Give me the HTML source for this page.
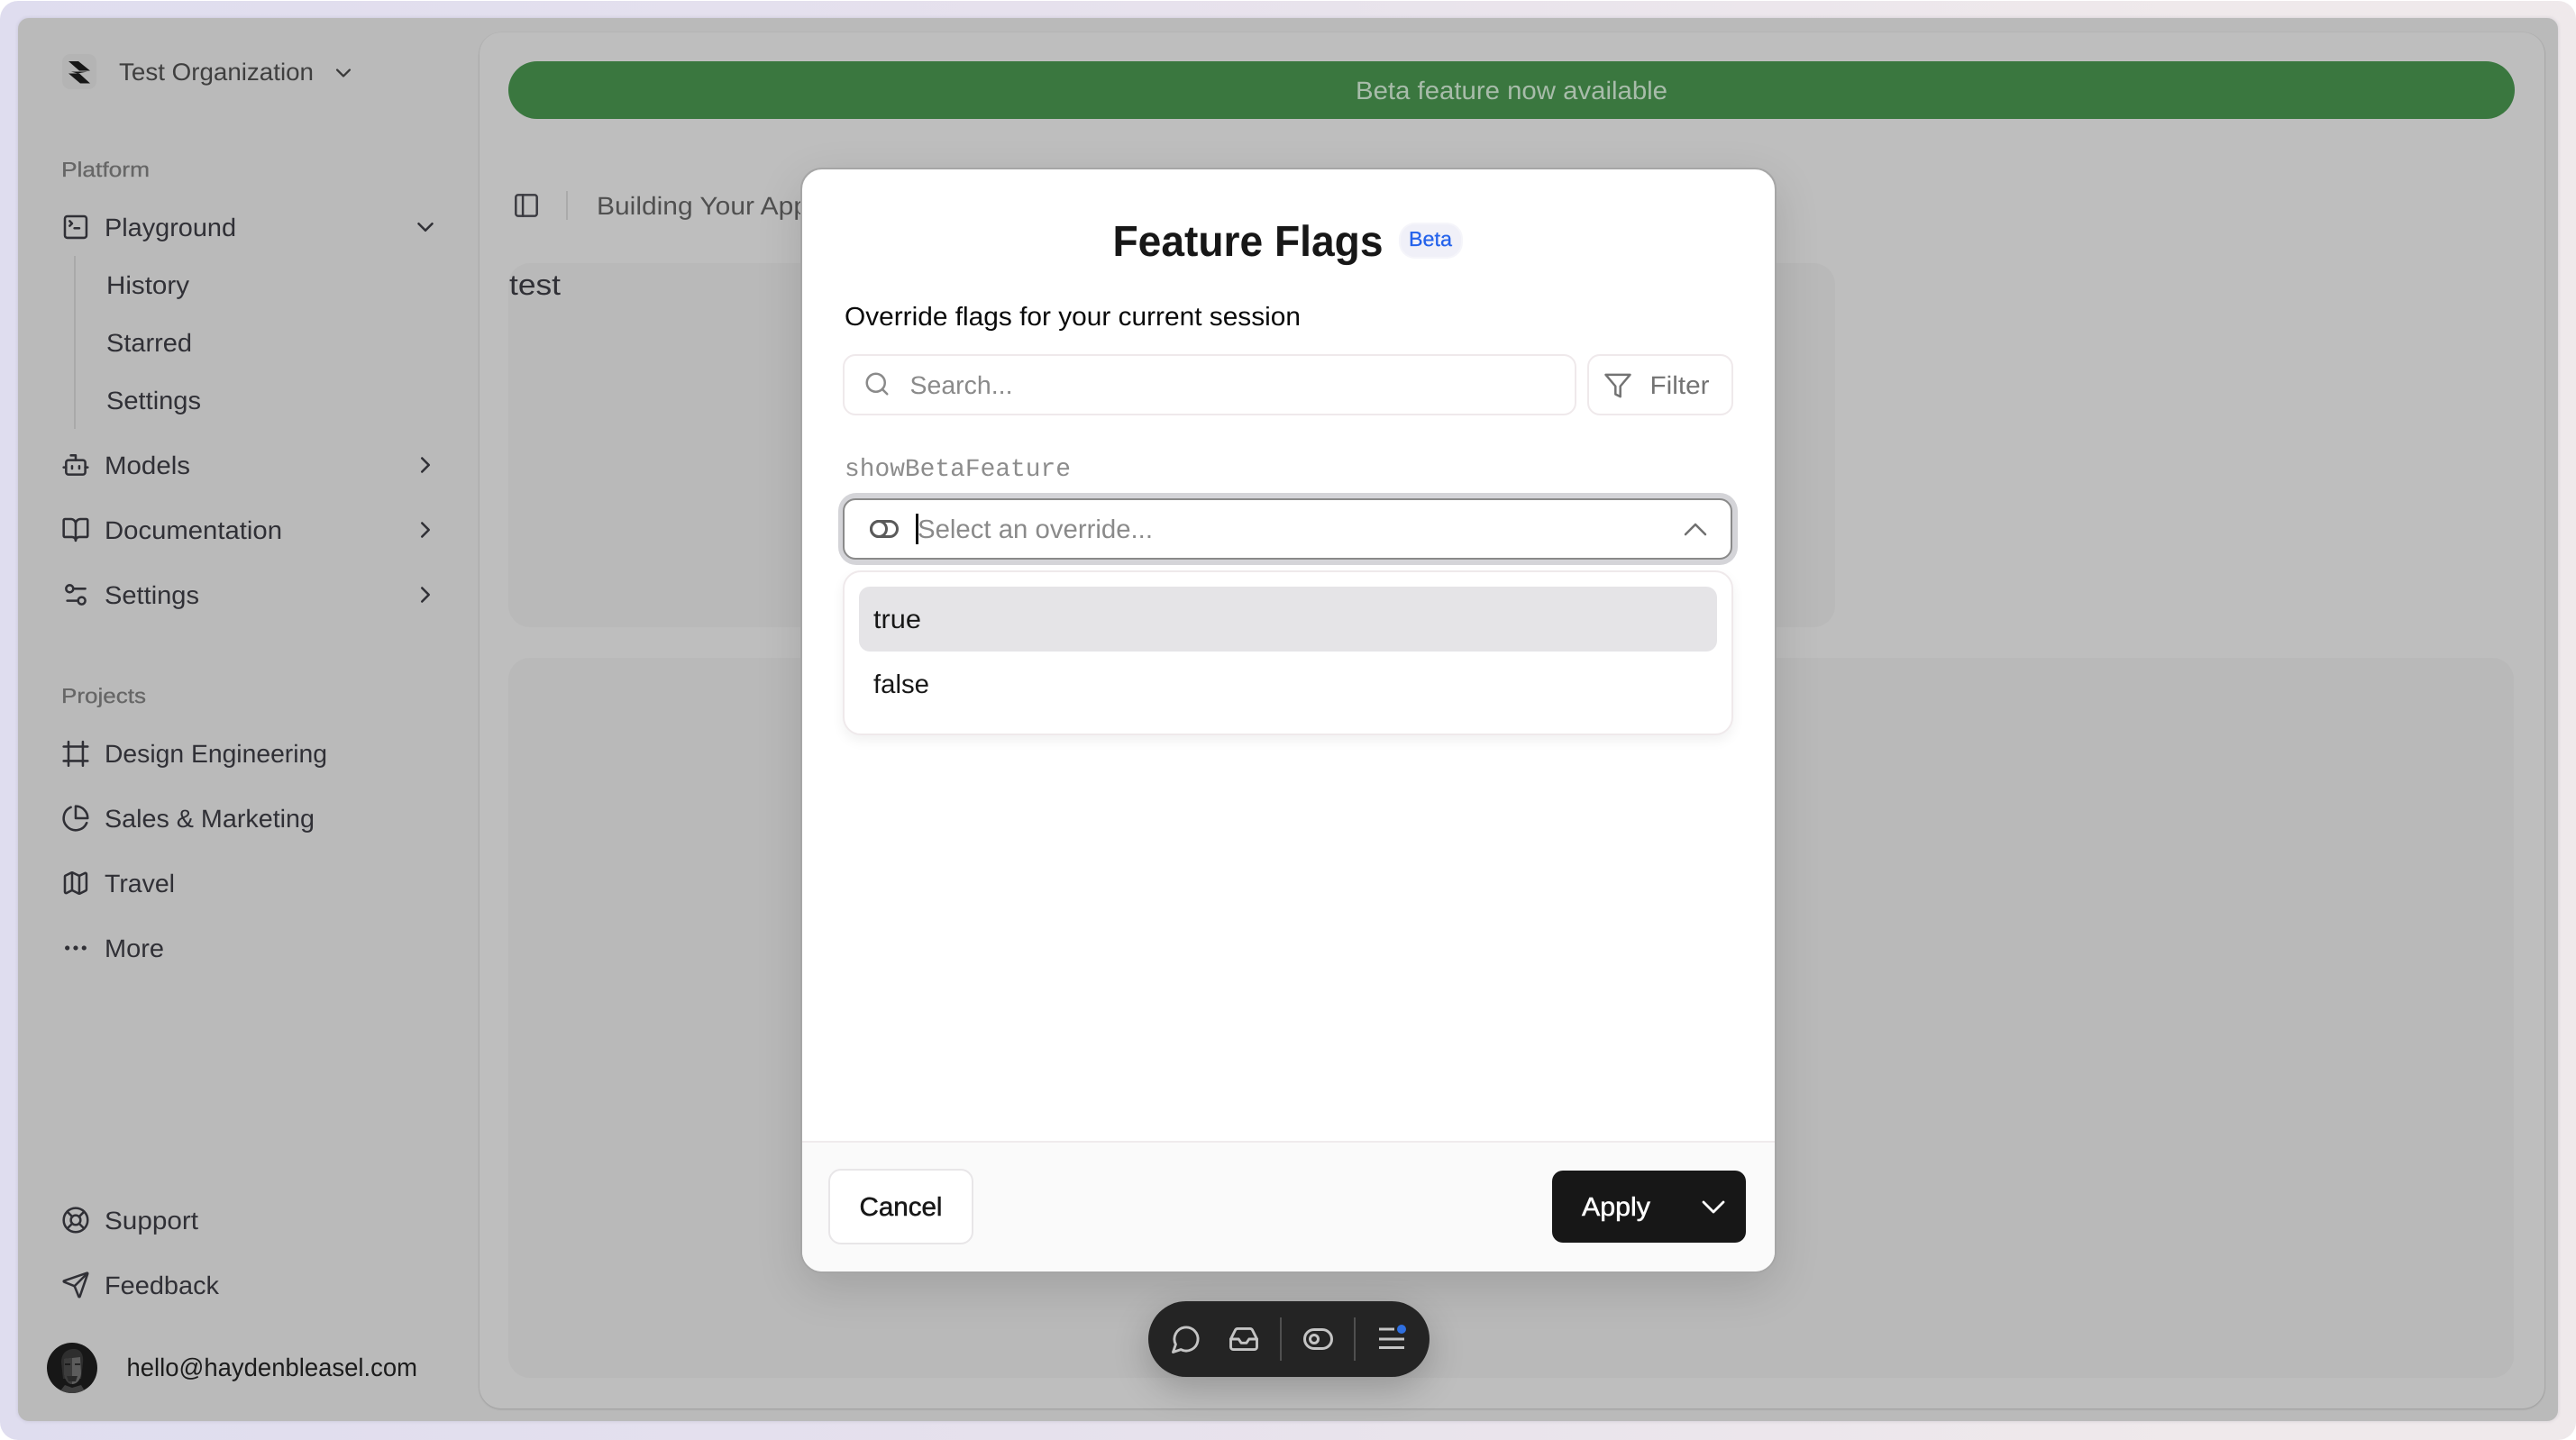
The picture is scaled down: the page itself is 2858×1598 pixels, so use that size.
<!DOCTYPE html>
<html lang="en">
<head>
<meta charset="utf-8">
<title>Feature Flags</title>
<style>
html,body{margin:0;padding:0;background:#fff;}
body{position:relative;width:2858px;height:1598px;overflow:hidden;font-family:"Liberation Sans",sans-serif;}
div{position:absolute;box-sizing:border-box;}
svg{position:absolute;left:0;top:0;overflow:visible;}
text{font-family:"Liberation Sans",sans-serif;text-rendering:geometricPrecision;}
.i{fill:none;stroke-linecap:round;stroke-linejoin:round;stroke-width:2;}
.n{fill:none;stroke:#303036;stroke-linecap:round;stroke-linejoin:round;stroke-width:1.9;}
#frame{left:0;top:1px;width:2858px;height:1597px;border-radius:20px;background:linear-gradient(90deg,#dfddef 0%,#e6e1ed 40%,#efe9eb 85%,#efe9eb 100%);}
#win{left:20px;top:20px;width:2818px;height:1557px;border-radius:12px;background:#bababa;box-shadow:0 0 4px rgba(60,60,90,.16);}
#main{left:532px;top:36px;width:2291px;height:1527px;border-radius:24px;background:#bebebe;box-shadow:0 1px 2px rgba(0,0,0,.16),-1px 0 1px rgba(0,0,0,.025),1px 0 1px rgba(0,0,0,.05);}
.card{background:#b9b9b9;border-radius:24px;}
#banner{left:564px;top:68px;width:2226px;height:64px;border-radius:32px;background:#3a773f;}
#modal{left:888px;top:186px;width:1083px;height:1227px;border-radius:24px;background:#fff;border:2px solid #a6a6a6;overflow:hidden;box-shadow:0 16px 50px rgba(0,0,0,.13);}
#foot{left:0;top:1078px;width:1079px;height:147px;background:#fafafa;border-top:2px solid #efebed;}
.box{background:#fff;border:2px solid #efe9eb;border-radius:14px;}
#toolbar{left:1274px;top:1444px;width:312px;height:84px;border-radius:42px;background:#242424;box-shadow:0 12px 40px rgba(0,0,0,.22);}
</style>
</head>
<body>
<div id="frame"></div>
<div id="win"></div>
<div id="main"></div>
<div class="card" style="left:564px;top:292px;width:1472px;height:404px;"></div>
<div class="card" style="left:564px;top:730px;width:2225px;height:799px;"></div>
<div id="banner"></div>

<svg width="2858" height="1598" viewBox="0 0 2858 1598">
  <!-- org -->
  <rect x="69" y="60" width="38" height="39" rx="9" fill="#b4b4b4"/>
  <path d="M76 68H87L100 78.5H88Z M76 81.5H88L100 92.5H89Z M79 79.5H97L86 81.5Z" fill="#171717"/>
  <text x="132" y="89" font-size="27" fill="#3f3f3f" textLength="216" lengthAdjust="spacingAndGlyphs">Test Organization</text>
  <g transform="translate(367.2 67.2) scale(1.15)"><path class="i" stroke="#3a3a3a" d="m6 9 6 6 6-6"/></g>

  <!-- banner text -->
  <text x="1504" y="110" font-size="28" fill="#a8bcaa" textLength="346" lengthAdjust="spacingAndGlyphs">Beta feature now available</text>

  <!-- Platform -->
  <text x="68" y="196" font-size="23" fill="#666" stroke="#666" stroke-width=".3" textLength="98" lengthAdjust="spacingAndGlyphs">Platform</text>

  <g transform="translate(68 236) scale(1.33)" class="n"><path d="m7 11 2-2-2-2"/><path d="M11 13h4"/><rect x="3" y="3" width="18" height="18" rx="2"/></g>
  <text x="116" y="262" font-size="28" fill="#303036" textLength="146" lengthAdjust="spacingAndGlyphs">Playground</text>
  <g transform="translate(457 237) scale(1.25)"><path class="i" stroke="#303036" d="m6 9 6 6 6-6"/></g>

  <rect x="82" y="284" width="2" height="192" fill="#a9a9a9"/>
  <text x="118" y="326" font-size="28" fill="#303036" textLength="92" lengthAdjust="spacingAndGlyphs">History</text>
  <text x="118" y="390" font-size="28" fill="#303036" textLength="95" lengthAdjust="spacingAndGlyphs">Starred</text>
  <text x="118" y="454" font-size="28" fill="#303036" textLength="105" lengthAdjust="spacingAndGlyphs">Settings</text>

  <g transform="translate(68 500) scale(1.33)" class="n"><path d="M12 8V4H8"/><rect width="16" height="12" x="4" y="8" rx="2"/><path d="M2 14h2"/><path d="M20 14h2"/><path d="M15 13v2"/><path d="M9 13v2"/></g>
  <text x="116" y="526" font-size="28" fill="#303036" textLength="95" lengthAdjust="spacingAndGlyphs">Models</text>
  <g transform="translate(457 501) scale(1.25)"><path class="i" stroke="#303036" d="m9 18 6-6-6-6"/></g>

  <g transform="translate(68 572) scale(1.33)" class="n"><path d="M12 7v14"/><path d="M3 18a1 1 0 0 1-1-1V4a1 1 0 0 1 1-1h5a4 4 0 0 1 4 4 4 4 0 0 1 4-4h5a1 1 0 0 1 1 1v13a1 1 0 0 1-1 1h-6a3 3 0 0 0-3 3 3 3 0 0 0-3-3z"/></g>
  <text x="116" y="598" font-size="28" fill="#303036" textLength="197" lengthAdjust="spacingAndGlyphs">Documentation</text>
  <g transform="translate(457 573) scale(1.25)"><path class="i" stroke="#303036" d="m9 18 6-6-6-6"/></g>

  <g transform="translate(68 644) scale(1.33)" class="n"><path d="M20 7h-9"/><path d="M14 17H5"/><circle cx="17" cy="17" r="3"/><circle cx="7" cy="7" r="3"/></g>
  <text x="116" y="670" font-size="28" fill="#303036" textLength="105" lengthAdjust="spacingAndGlyphs">Settings</text>
  <g transform="translate(457 645) scale(1.25)"><path class="i" stroke="#303036" d="m9 18 6-6-6-6"/></g>

  <!-- Projects -->
  <text x="68" y="780" font-size="23" fill="#666" stroke="#666" stroke-width=".3" textLength="94" lengthAdjust="spacingAndGlyphs">Projects</text>

  <g transform="translate(68 820.5) scale(1.33)" class="n"><path d="M22 6H2"/><path d="M22 18H2"/><path d="M6 2v20"/><path d="M18 2v20"/></g>
  <text x="116" y="846" font-size="28" fill="#303036" textLength="247" lengthAdjust="spacingAndGlyphs">Design Engineering</text>

  <g transform="translate(68 892) scale(1.33)" class="n"><path d="M21.21 15.89A10 10 0 1 1 8 2.83"/><path d="M22 12A10 10 0 0 0 12 2v10z"/></g>
  <text x="116" y="918" font-size="28" fill="#303036" textLength="233" lengthAdjust="spacingAndGlyphs">Sales &amp; Marketing</text>

  <g transform="translate(68 964) scale(1.33)" class="n"><path d="M14.106 5.553a2 2 0 0 0 1.788 0l3.659-1.83A1 1 0 0 1 21 4.619v12.764a1 1 0 0 1-.553.894l-4.553 2.277a2 2 0 0 1-1.788 0l-4.212-2.106a2 2 0 0 0-1.788 0l-3.659 1.83A1 1 0 0 1 3 19.381V6.618a1 1 0 0 1 .553-.894l4.553-2.277a2 2 0 0 1 1.788 0z"/><path d="M15 5.764v15"/><path d="M9 3.236v15"/></g>
  <text x="116" y="990" font-size="28" fill="#303036" textLength="78" lengthAdjust="spacingAndGlyphs">Travel</text>

  <g transform="translate(68 1036) scale(1.33)" class="n"><circle cx="12" cy="12" r="1"/><circle cx="19" cy="12" r="1"/><circle cx="5" cy="12" r="1"/></g>
  <text x="116" y="1062" font-size="28" fill="#303036" textLength="66" lengthAdjust="spacingAndGlyphs">More</text>

  <!-- Footer nav -->
  <g transform="translate(68 1338) scale(1.33)" class="n"><circle cx="12" cy="12" r="10"/><path d="m4.93 4.93 4.24 4.24"/><path d="m14.83 9.17 4.24-4.24"/><path d="m14.83 14.83 4.24 4.24"/><path d="m9.17 14.83-4.24 4.24"/><circle cx="12" cy="12" r="4"/></g>
  <text x="116" y="1364" font-size="28" fill="#303036" textLength="104" lengthAdjust="spacingAndGlyphs">Support</text>

  <g transform="translate(68 1410) scale(1.33)" class="n"><path d="M14.536 21.686a.5.5 0 0 0 .937-.024l6.5-19a.496.496 0 0 0-.635-.635l-19 6.5a.5.5 0 0 0-.024.937l7.93 3.18a2 2 0 0 1 1.112 1.11z"/><path d="m21.854 2.147-10.94 10.939"/></g>
  <text x="116" y="1436" font-size="28" fill="#303036" textLength="127" lengthAdjust="spacingAndGlyphs">Feedback</text>

  <!-- Avatar -->
  <clipPath id="av"><circle cx="80" cy="1518" r="28"/></clipPath>
  <circle cx="80" cy="1518" r="28" fill="#171717"/>
  <g clip-path="url(#av)">
    <path d="M68 1512C68 1500 76 1497 82 1497C90 1497 93 1504 92 1512L90 1530L70 1530Z" fill="#2e2e2e"/>
    <path d="M71 1508L89 1506L90 1524C89 1533 84 1536 80 1536C75 1536 72 1531 71 1524Z" fill="#5c5c5c"/>
    <path d="M80 1507L71 1508L71 1524C72 1531 75 1536 80 1536Z" fill="#3c3c3c"/>
    <rect x="72" y="1513" width="6" height="2" fill="#1c1c1c"/><rect x="83" y="1513" width="6" height="2" fill="#262626"/>
    <path d="M74 1527H86L84 1533H76Z" fill="#2a2a2a"/>
    <path d="M62 1550L72 1537L80 1540L90 1537L98 1550Z" fill="#3f3f3f"/>
  </g>
  <text x="140.5" y="1527" font-size="28" fill="#1c1c1c" textLength="322.5" lengthAdjust="spacingAndGlyphs">hello@haydenbleasel.com</text>

  <!-- Header -->
  <g transform="translate(568.4 212.4) scale(1.3)"><g class="i" stroke="#3a3a40" style="stroke-width:1.9"><rect x="3" y="3" width="18" height="18" rx="2"/><path d="M9 3v18"/></g></g>
  <rect x="628" y="212" width="2" height="32" fill="#aaaaaa"/>
  <text x="662" y="238" font-size="28" fill="#505050" textLength="235" lengthAdjust="spacingAndGlyphs">Building Your App</text>
  <text x="565" y="327" font-size="32" fill="#303036" textLength="57" lengthAdjust="spacingAndGlyphs">test</text>
</svg>

<div id="modal"><div id="foot"></div></div>

<div class="box" style="left:935px;top:393px;width:814px;height:68px;"></div>
<div class="box" style="left:1761px;top:393px;width:162px;height:68px;"></div>
<div style="left:930px;top:547px;width:998px;height:80px;border-radius:20px;background:#d4d4d8;"></div>
<div style="left:935px;top:553px;width:987px;height:68px;border-radius:14px;background:#fff;border:2px solid #8a8a8a;"></div>
<div class="box" style="left:935px;top:633px;width:988px;height:183px;border-radius:20px;box-shadow:0 6px 14px rgba(0,0,0,.06);"></div>
<div style="left:953px;top:651px;width:952px;height:72px;border-radius:12px;background:#e5e4e7;"></div>
<div style="left:919px;top:1297px;width:161px;height:84px;border-radius:14px;background:#fff;border:2px solid #e8e6e8;"></div>
<div style="left:1722px;top:1299px;width:215px;height:80px;border-radius:12px;background:#171717;"></div>
<div id="toolbar"></div>

<svg width="2858" height="1598" viewBox="0 0 2858 1598">
  <text x="1234.5" y="284" font-size="48" font-weight="700" fill="#171717" textLength="300" lengthAdjust="spacingAndGlyphs">Feature Flags</text>
  <rect x="1553" y="248" width="69" height="38" rx="17" fill="#f0f0f8" stroke="#f5f5fa" stroke-width="2"/>
  <text x="1563" y="273" font-size="23" fill="#2563eb" stroke="#2563eb" stroke-width=".3" textLength="48" lengthAdjust="spacingAndGlyphs">Beta</text>
  <text x="937" y="361" font-size="29" fill="#0a0a0a" textLength="506" lengthAdjust="spacingAndGlyphs">Override flags for your current session</text>

  <g transform="translate(958 411) scale(1.25)"><g class="i" stroke="#8a8a8a"><path d="m21 21-4.34-4.34"/><circle cx="11" cy="11" r="8"/></g></g>
  <text x="1009.5" y="437" font-size="28" fill="#8a8a8a" textLength="114" lengthAdjust="spacingAndGlyphs">Search...</text>

  <g transform="translate(1778.8 411.8) scale(1.35)"><path class="i" stroke="#737373" style="stroke-width:1.85" d="M22 3H2l8 9.46V19l4 2v-8.54z"/></g>
  <text x="1830.5" y="437" font-size="28" fill="#737373" textLength="66" lengthAdjust="spacingAndGlyphs">Filter</text>

  <text x="937" y="528" font-size="27.8" style="font-family:'Liberation Mono',monospace" fill="#8c8c8c" textLength="251" lengthAdjust="spacingAndGlyphs">showBetaFeature</text>

  <rect x="966.5" y="578.5" width="29" height="17" rx="8.5" fill="none" stroke="#5a5a5a" stroke-width="3"/>
  <circle cx="975" cy="587" r="8.5" fill="none" stroke="#5a5a5a" stroke-width="3"/>
  <rect x="1016" y="570" width="3" height="34" fill="#111"/>
  <text x="1018" y="597" font-size="29" fill="#8a8a8a" textLength="261" lengthAdjust="spacingAndGlyphs">Select an override...</text>
  <path d="M1870 593L1881 582L1892 593" fill="none" stroke="#707070" stroke-width="2.5" stroke-linecap="round" stroke-linejoin="round"/>

  <text x="969" y="697" font-size="29" fill="#171717" textLength="53" lengthAdjust="spacingAndGlyphs">true</text>
  <text x="969" y="769" font-size="29" fill="#171717" textLength="62" lengthAdjust="spacingAndGlyphs">false</text>

  <text x="953.5" y="1349" font-size="29" fill="#171717" stroke="#171717" stroke-width=".5" textLength="92" lengthAdjust="spacingAndGlyphs">Cancel</text>
  <text x="1755" y="1349" font-size="29" fill="#fff" stroke="#fff" stroke-width=".5" textLength="76" lengthAdjust="spacingAndGlyphs">Apply</text>
  <path d="M1890 1334L1901 1345L1912 1334" fill="none" stroke="#fff" stroke-width="2.8" stroke-linecap="round" stroke-linejoin="round"/>

  <!-- Toolbar -->
  <g transform="translate(1298.6 1468.6) scale(1.45)"><path class="i" stroke="#c4c4c4" d="M7.9 20A9 9 0 1 0 4 16.1L2 22Z"/></g>
  <g transform="translate(1362.6 1468.6) scale(1.45)"><g class="i" stroke="#c4c4c4"><polyline points="22 12 16 12 14 15 10 15 8 12 2 12"/><path d="M5.45 5.11 2 12v6a2 2 0 0 0 2 2h16a2 2 0 0 0 2-2v-6l-3.45-6.89A2 2 0 0 0 16.76 4H7.24a2 2 0 0 0-1.79 1.11z"/></g></g>
  <rect x="1420" y="1462" width="2" height="48" fill="#505050"/>
  <rect x="1447.5" y="1475.5" width="30" height="21" rx="10.5" fill="none" stroke="#c4c4c4" stroke-width="3"/>
  <circle cx="1458" cy="1486" r="4.5" fill="none" stroke="#c4c4c4" stroke-width="3"/>
  <rect x="1502" y="1462" width="2" height="48" fill="#505050"/>
  <rect x="1530" y="1473.5" width="17" height="3" fill="#c4c4c4"/>
  <rect x="1530" y="1484.5" width="28" height="3" fill="#c4c4c4"/>
  <rect x="1530" y="1494" width="28" height="3" fill="#c4c4c4"/>
  <circle cx="1555" cy="1475" r="5" fill="#2f6fdf"/>
</svg>
</body>
</html>
